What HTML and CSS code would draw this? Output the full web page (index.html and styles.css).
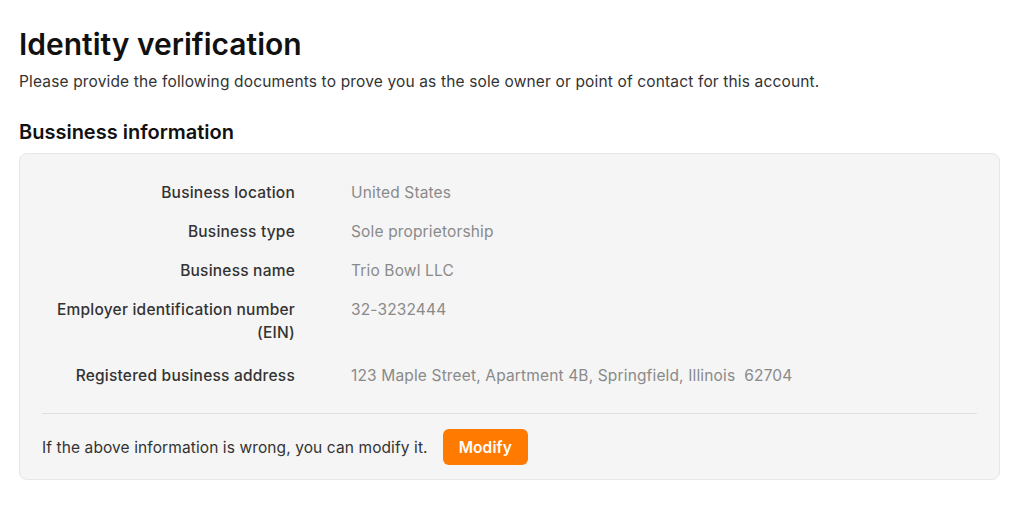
FILE: index.html
```html
<!DOCTYPE html>
<html lang="en">
<head>
    <meta charset="UTF-8">
    <meta name="viewport" content="width=device-width, initial-scale=1.0">
    <title>Identity verification</title>
    <link rel="stylesheet" href="styles.css">
</head>
<body>
    <div class="page">
        <h1 class="title">Identity verification</h1>
        <p class="subtitle">Please provide the following documents to prove you as the sole owner or point of contact for this account.</p>

        <h2 class="section-title">Bussiness information</h2>
        <div class="card">
            <div class="info">
                <div class="label">Business location</div>
                <div class="value">United States</div>

                <div class="label">Business type</div>
                <div class="value">Sole proprietorship</div>

                <div class="label">Business name</div>
                <div class="value">Trio Bowl LLC</div>

                <div class="label">Employer identification number (EIN)</div>
                <div class="value">32-3232444</div>

                <div class="label last">Registered business address</div>
                <div class="value last">123 Maple Street, Apartment 4B, Springfield, Illinois&nbsp; 62704</div>
            </div>
            <div class="footer">
                <span>If the above information is wrong, you can modify it.</span>
                <button class="button">Modify</button>
            </div>
        </div>
    </div>
</body>
</html>
```

FILE: styles.css
```css
body {
    margin: 0;
    background-color: #ffffff;
    font-family: Inter, 'Noto Sans', sans-serif;
    color: #333;
}

.page {
    padding: 26px 24px 0 19px;
}

.title {
    margin: 0;
    font-size: 30px;
    font-weight: 600;
    line-height: 36px;
    color: #111;
}

.subtitle {
    margin: 9px 0 0;
    font-size: 15.5px;
    letter-spacing: 0.15px;
    line-height: 22px;
    color: #333;
}

.section-title {
    margin: 27px 0 0;
    font-size: 20px;
    font-weight: 600;
    line-height: 24px;
    color: #111;
}

.card {
    margin-top: 9px;
    background-color: #f5f5f5;
    border: 1px solid #e6e6e6;
    border-radius: 8px;
    padding: 27px 22px 14px 22px;
}

.info {
    display: grid;
    grid-template-columns: 253px 1fr;
    column-gap: 56px;
    row-gap: 16px;
    font-size: 15.5px;
    letter-spacing: 0.15px;
    line-height: 23px;
    padding-bottom: 26px;
    border-bottom: 1px solid #e0e0e0;
}

.label {
    text-align: right;
    font-weight: 500;
    letter-spacing: 0.22px;
    color: #333;
}

.value {
    color: #8a8a8a;
}

.label.last,
.value.last {
    margin-top: 4px;
}

.footer {
    display: flex;
    align-items: center;
    gap: 15px;
    margin-top: 15px;
    font-size: 15.5px;
    letter-spacing: 0.1px;
    color: #333;
}

.button {
    background-color: #ff7a00;
    color: #fff;
    border: none;
    border-radius: 6px;
    height: 36px;
    padding: 0 16px;
    font-family: inherit;
    font-size: 15.5px;
    letter-spacing: 0.1px;
    font-weight: 600;
    cursor: pointer;
}
```
